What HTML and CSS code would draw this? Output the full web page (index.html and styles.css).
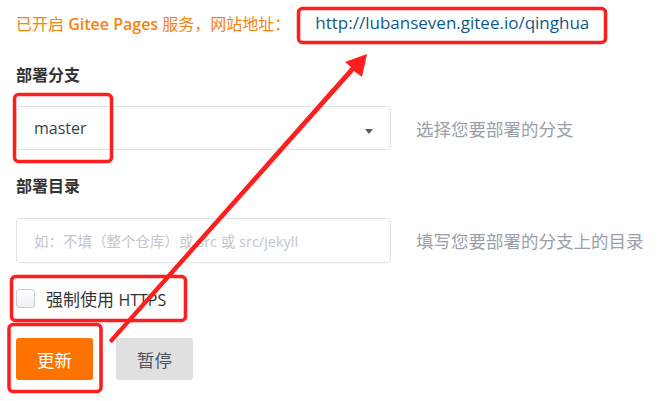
FILE: index.html
```html
<!DOCTYPE html>
<html lang="zh">
<head>
<meta charset="utf-8">
<link rel="stylesheet" href="styles.css">
</head>
<body>
<div class="page">
  <div class="notice">
    <span class="notice-text">已开启 <span class="notice-brand">Gitee Pages</span> 服务，网站地址：</span>
    <a class="notice-link" href="#">http://lubanseven.gitee.io/qinghua</a>
  </div>

  <div class="field">
    <div class="label">部署分支</div>
    <div class="row">
      <div class="select">
        <span class="select-value">master</span>
        <span class="caret"></span>
      </div>
      <span class="hint">选择您要部署的分支</span>
    </div>
  </div>

  <div class="field field-dir">
    <div class="label">部署目录</div>
    <div class="row">
      <div class="input">
        <span class="placeholder">如：不填（整个仓库）或 src 或 src/jekyll</span>
      </div>
      <span class="hint">填写您要部署的分支上的目录</span>
    </div>
  </div>

  <label class="check">
    <span class="check-box"></span>
    <span class="check-text">强制使用 <span class="check-latin">HTTPS</span></span>
  </label>

  <div class="actions">
    <button class="btn btn-primary">更新</button>
    <button class="btn btn-default">暂停</button>
  </div>
</div>

<svg class="annot" width="660" height="401" viewBox="0 0 660 401">
  <g fill="none" stroke="#ff1e1e" stroke-width="3.5">
    <rect x="298.5" y="8.5" width="307" height="34" rx="4"/>
    <rect x="14.5" y="94.5" width="97" height="67" rx="4"/>
    <rect x="11.5" y="276.5" width="174" height="44" rx="4"/>
    <rect x="9" y="324.5" width="92" height="67" rx="4"/>
  </g>
  <polygon fill="#ff1e1e" points="110,342 112,343 354,71 362,77 367,54 345,62 351,67 109,340"/>
</svg>
</body>
</html>
```
FILE: styles.css
```css
html, body {
  margin: 0;
  padding: 0;
  background: #ffffff;
}

body {
  width: 660px;
  height: 401px;
  overflow: hidden;
  position: relative;
  font-family: "Open Sans", "Noto Sans CJK SC", sans-serif;
}

.page {
  padding: 0 0 0 16px;
}

.notice {
  height: 42px;
  padding-top: 3px;
  box-sizing: border-box;
  display: flex;
  align-items: center;
  white-space: nowrap;
}

.notice-text {
  color: #f5820f;
  font-size: 16px;
}

.notice-brand {
  font-weight: 600;
}

.notice-link {
  color: #115a86;
  text-decoration: none;
  font-size: 17px;
  margin-left: 25px;
}

.field {
  margin-top: 20px;
}

.label {
  font-size: 16px;
  font-weight: 600;
  color: #333333;
  height: 26px;
  line-height: 26px;
}

.row {
  display: flex;
  align-items: center;
  margin-top: 18px;
}

.select,
.input {
  box-sizing: border-box;
  width: 375px;
  height: 44px;
  border: 1px solid #dfe2e8;
  border-radius: 4px;
  display: flex;
  align-items: center;
  padding: 0 17px;
  position: relative;
}

.select-value {
  font-size: 16px;
  color: #3a4250;
}

.caret {
  position: absolute;
  right: 17px;
  top: 22px;
  width: 0;
  height: 0;
  border-left: 4.5px solid transparent;
  border-right: 4.5px solid transparent;
  border-top: 5px solid #555a64;
}

.placeholder {
  font-size: 14.5px;
  color: #c3c6cc;
  white-space: nowrap;
}

.hint {
  margin-left: 25px;
  font-size: 17.5px;
  color: #9a9fa9;
  white-space: nowrap;
}

.field-dir {
  margin-top: 23px;
}

.field-dir .row {
  margin-top: 19px;
}

.field-dir .input {
  height: 45px;
}

.check {
  display: flex;
  align-items: center;
  margin-top: 23px;
  height: 24px;
}

.check-box {
  box-sizing: border-box;
  width: 19px;
  height: 19px;
  border: 1px solid #c8cbd2;
  border-radius: 3px;
  background: linear-gradient(#ffffff, #eeeff2);
}

.check-text {
  margin-left: 11px;
  font-size: 17px;
  color: #333333;
}

.check-latin {
  font-size: 16px;
}

.actions {
  display: flex;
  gap: 23px;
  margin-top: 28px;
}

.btn {
  width: 77px;
  height: 42px;
  border: none;
  border-radius: 3px;
  font-family: "Noto Sans CJK SC", sans-serif;
  font-size: 17.5px;
  cursor: pointer;
  padding: 0;
}

.btn-primary {
  background: #fe7300;
  color: #ffffff;
}

.btn-default {
  background: #e0e0e0;
  color: #4a5260;
}

.annot {
  position: absolute;
  left: 0;
  top: 0;
  pointer-events: none;
}
```
